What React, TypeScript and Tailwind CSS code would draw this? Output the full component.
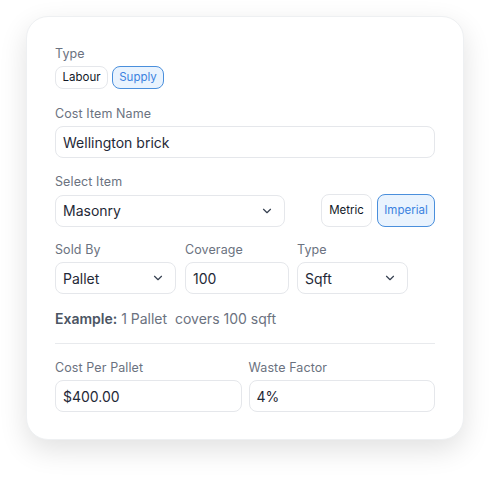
import React from "react";
import { ChevronDown } from "lucide-react";

const font = { fontFamily: "Inter, 'Noto Sans', sans-serif" };

function Label({ children }: { children: React.ReactNode }) {
  return <div className="mb-1 h-4 text-[12.5px] leading-4 tracking-[0.1px] text-[#6b7280]">{children}</div>;
}

function Input({ value, className = "" }: { value: string; className?: string }) {
  return (
    <div
      className={`flex h-8 items-center rounded-lg border border-[#e5e7eb] bg-white pl-[7px] text-[14px] text-[#1f2937] ${className}`}
    >
      {value}
    </div>
  );
}

function Select({ value, className = "" }: { value: string; className?: string }) {
  return (
    <div
      className={`flex h-8 items-center justify-between rounded-lg border border-[#e5e7eb] bg-white pl-[7px] pr-[10px] text-[14px] text-[#1f2937] ${className}`}
    >
      <span>{value}</span>
      <ChevronDown className="h-[14px] w-[14px] text-[#374151]" strokeWidth={2} />
    </div>
  );
}

function Chip({ label, active, className = "" }: { label: string; active?: boolean; className?: string }) {
  return (
    <div
      className={`flex items-center justify-center rounded-lg border text-[11.5px] ${
        active
          ? "border-[#4a8fdc] bg-[#e9f3fe] text-[#3b82e0]"
          : "border-[#e5e7eb] bg-white text-[#111827]"
      } ${className}`}
    >
      {label}
    </div>
  );
}

export default function App() {
  return (
    <div className="min-h-screen bg-white px-[26px] pt-4" style={font}>
      <div className="w-[438px] rounded-[22px] border border-[#eef0f2] bg-white px-[28px] pb-[27px] pt-[29px] shadow-[0_10px_28px_rgba(0,0,0,0.12)]">
        {/* Type */}
        <Label>Type</Label>
        <div className="flex gap-1">
          <Chip label="Labour" className="h-[23px] w-[53px]" />
          <Chip label="Supply" active className="h-[23px] w-[52px]" />
        </div>

        {/* Cost item name */}
        <div className="mt-[17px]">
          <Label>Cost Item Name</Label>
          <Input value="Wellington brick" />
        </div>

        {/* Select item */}
        <div className="mt-4">
          <Label>Select Item</Label>
          <div className="flex items-center justify-between">
            <Select value="Masonry" className="w-[230px]" />
            <div className="flex gap-[5px]">
              <Chip label="Metric" className="h-[33px] w-[51px]" />
              <Chip label="Imperial" active className="h-[33px] w-[58px]" />
            </div>
          </div>
        </div>

        {/* Sold by / coverage / type */}
        <div className="mt-[15px] flex">
          <div className="w-[121px]">
            <Label>Sold By</Label>
            <Select value="Pallet" />
          </div>
          <div className="ml-[9px] w-[104px]">
            <Label>Coverage</Label>
            <Input value="100" />
          </div>
          <div className="ml-2 w-[111px]">
            <Label>Type</Label>
            <Select value="Sqft" />
          </div>
        </div>

        <div className="mt-[15px] text-[14px] leading-5 text-[#6b7280]">
          <span className="font-semibold text-[#4b5563]">Example:</span> 1 Pallet&nbsp; covers 100 sqft
        </div>

        <div className="mt-[14px] border-t border-[#e8eaed]" />

        {/* Cost / waste */}
        <div className="mt-4 grid grid-cols-2 gap-[7px]">
          <div>
            <Label>Cost Per Pallet</Label>
            <Input value="$400.00" />
          </div>
          <div>
            <Label>Waste Factor</Label>
            <Input value="4%" />
          </div>
        </div>
      </div>
    </div>
  );
}
